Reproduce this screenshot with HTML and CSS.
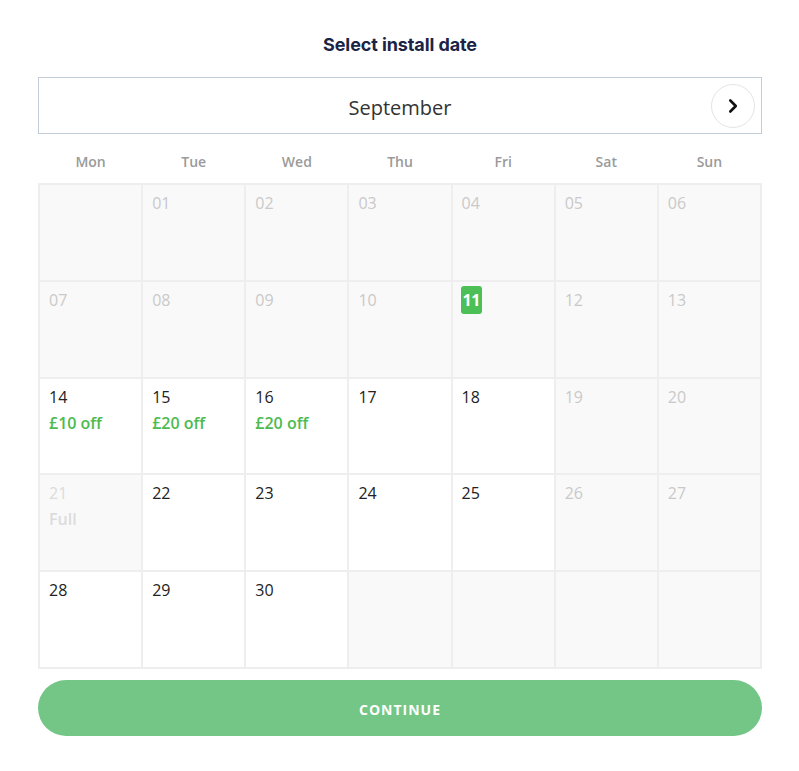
FILE: index.html
```html
<!DOCTYPE html>
<html lang="en">
<head>
<meta charset="utf-8">
<title>Select install date</title>
<link rel="stylesheet" href="styles.css">
</head>
<body>
<main class="page">
  <h1 class="title">Select install date</h1>
  <div class="month-bar">
    <span class="month-name">September</span>
    <button class="next-btn" aria-label="Next month">
      <svg width="14" height="16" viewBox="0 0 14 16"><path d="M4.3 2.5 L9.8 8 L4.3 13.5" fill="none" stroke="#111" stroke-width="2.6" stroke-linecap="round" stroke-linejoin="round"/></svg>
    </button>
  </div>
  <div class="weekdays">
    <span>Mon</span><span>Tue</span><span>Wed</span><span>Thu</span><span>Fri</span><span>Sat</span><span>Sun</span>
  </div>
  <div class="calendar">
    <div class="cell off"></div>
    <div class="cell off"><span class="num">01</span></div>
    <div class="cell off"><span class="num">02</span></div>
    <div class="cell off"><span class="num">03</span></div>
    <div class="cell off"><span class="num">04</span></div>
    <div class="cell off"><span class="num">05</span></div>
    <div class="cell off"><span class="num">06</span></div>

    <div class="cell off"><span class="num">07</span></div>
    <div class="cell off"><span class="num">08</span></div>
    <div class="cell off"><span class="num">09</span></div>
    <div class="cell off"><span class="num">10</span></div>
    <div class="cell off"><span class="num today">11</span></div>
    <div class="cell off"><span class="num">12</span></div>
    <div class="cell off"><span class="num">13</span></div>

    <div class="cell"><span class="num">14</span><span class="deal">£10 off</span></div>
    <div class="cell"><span class="num">15</span><span class="deal">£20 off</span></div>
    <div class="cell"><span class="num">16</span><span class="deal">£20 off</span></div>
    <div class="cell"><span class="num">17</span></div>
    <div class="cell"><span class="num">18</span></div>
    <div class="cell off"><span class="num">19</span></div>
    <div class="cell off"><span class="num">20</span></div>

    <div class="cell off full"><span class="num">21</span><span class="deal">Full</span></div>
    <div class="cell"><span class="num">22</span></div>
    <div class="cell"><span class="num">23</span></div>
    <div class="cell"><span class="num">24</span></div>
    <div class="cell"><span class="num">25</span></div>
    <div class="cell off"><span class="num">26</span></div>
    <div class="cell off"><span class="num">27</span></div>

    <div class="cell"><span class="num">28</span></div>
    <div class="cell"><span class="num">29</span></div>
    <div class="cell"><span class="num">30</span></div>
    <div class="cell off"></div>
    <div class="cell off"></div>
    <div class="cell off"></div>
    <div class="cell off"></div>
  </div>
  <button class="continue">CONTINUE</button>
</main>
</body>
</html>
```

FILE: styles.css
```css
* { box-sizing: border-box; }
html, body { margin: 0; padding: 0; background: #fff; }
body {
  font-family: "Open Sans", "Noto Sans", "DejaVu Sans", sans-serif;
  color: #222;
}
.page {
  padding: 33px 37px 0 38px;
}
.title {
  margin: 0 0 20px;
  text-align: center;
  font-family: "Inter", "Lato", sans-serif;
  font-weight: 700;
  font-size: 18px;
  line-height: 24px;
  letter-spacing: -0.1px;
  color: #1b2446;
}
.month-bar {
  height: 57px;
  border: 1px solid #c3cdd9;
  display: flex;
  align-items: center;
  justify-content: center;
  position: relative;
}
.month-name {
  font-size: 20px;
  color: #333;
  font-weight: 400;
  padding-top: 3px;
}
.next-btn {
  position: absolute;
  right: 6px;
  top: 6px;
  width: 44px;
  height: 44px;
  border-radius: 50%;
  border: 1px solid #e4e4e4;
  background: #fff;
  display: flex;
  align-items: center;
  justify-content: center;
  padding: 0;
  cursor: pointer;
}
.weekdays {
  display: grid;
  grid-template-columns: repeat(7, 1fr);
  padding: 18px 1px 11px;
}
.weekdays span {
  text-align: center;
  font-size: 14px;
  line-height: 20px;
  font-weight: 600;
  color: #9a9a9a;
}
.calendar {
  display: grid;
  grid-template-columns: repeat(7, 1fr);
  grid-auto-rows: 96.75px;
  border: 1px solid #eeeeee;
}
.cell {
  border: 1px solid #eeeeee;
  background: #fff;
  padding: 7px 9px;
  display: flex;
  flex-direction: column;
  align-items: flex-start;
}
.cell.off { background: #f9f9f9; }
.num {
  font-size: 16px;
  line-height: 22px;
  color: #222;
}
.off .num { color: #c9c9c9; }
.full .num, .full .deal { color: #dcdcdc; }
.num.today {
  background: #4cbf57;
  color: #fff;
  font-weight: 700;
  border-radius: 3px;
  padding: 3px 2px;
  margin: -3px 0 0 -1px;
  line-height: 22px;
  letter-spacing: -0.5px;
}
.deal {
  font-size: 16px;
  line-height: 22px;
  margin-top: 4px;
  font-weight: 600;
  color: #4cbb50;
}
.continue {
  display: block;
  width: 100%;
  height: 56px;
  margin-top: 11px;
  border: none;
  border-radius: 28px;
  background: #74c687;
  color: #fff;
  font-family: "Open Sans", "Noto Sans", sans-serif;
  font-weight: 700;
  font-size: 14px;
  letter-spacing: 1px;
  padding: 4px 0 0;
  cursor: pointer;
}
```
